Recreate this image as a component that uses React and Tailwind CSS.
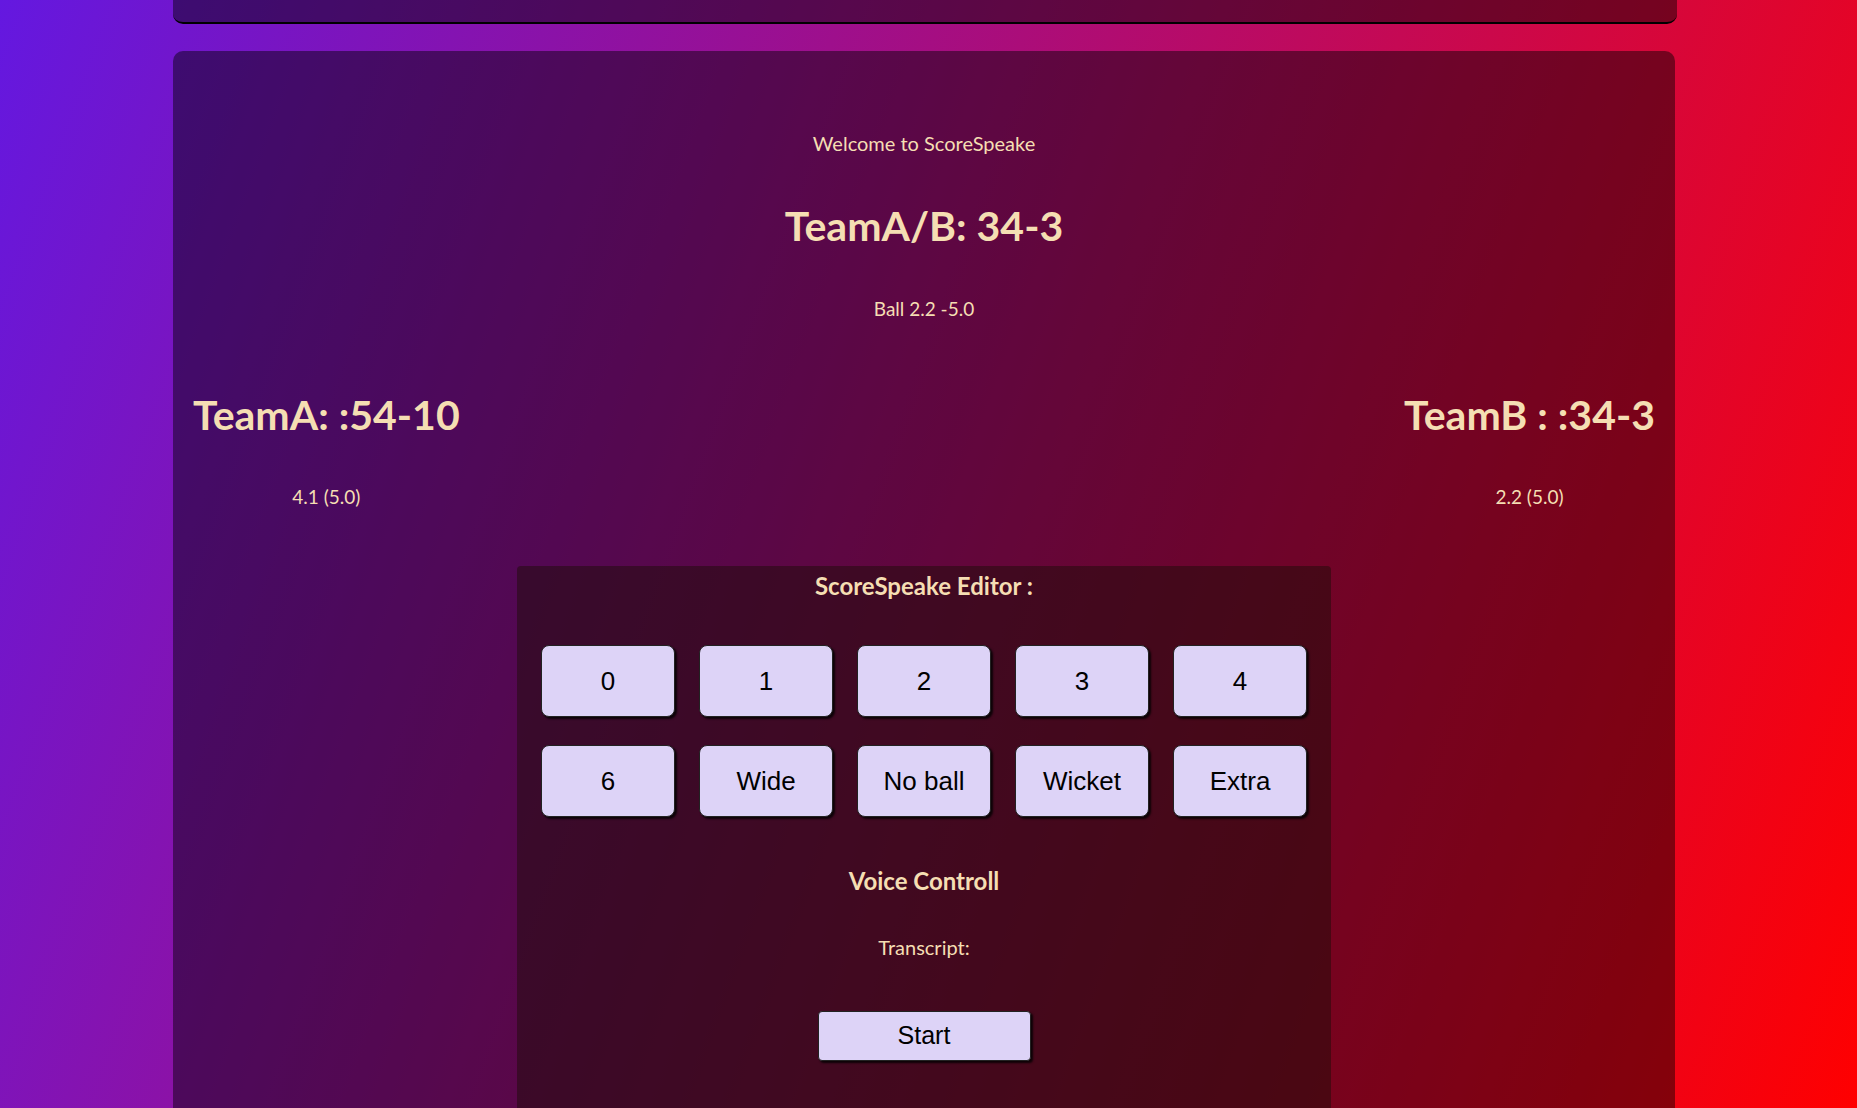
import React from 'react'

const RUNS = ['0', '1', '2', '3', '4', '6', 'Wide', 'No ball', 'Wicket', 'Extra']

function TeamScore({ name, score, overs }) {
  return (
    <div className="flex flex-col items-center">
      <h2 className="text-[41px] leading-[52px] font-bold">{name} :{score}</h2>
      <p className="mt-[45px] text-[19px] leading-[22px]">{overs}</p>
    </div>
  )
}

export default function App() {
  return (
    <div
      className="h-screen overflow-hidden bg-[linear-gradient(110deg,#6418e0_0%,#ff0000_100%)] text-[wheat]"
      style={{ fontFamily: 'Lato, "Open Sans", sans-serif' }}
    >
      {/* nav bar, mostly scrolled off */}
      <div className="ml-[173px] h-[24px] w-[1504px] rounded-b-[10px] border-b-2 border-black bg-black/45" />

      <div className="ml-[173px] mt-[27px] w-[1502px] rounded-[10px] bg-black/45 px-[20px] pt-[80px] pb-[80px]">
        <p className="text-center text-[20px] leading-[24px]">Welcome to ScoreSpeake</p>
        <h1 className="mt-[45px] text-center text-[41px] leading-[52px] font-bold">TeamA/B: 34-3</h1>
        <p className="mt-[46px] text-center text-[19px] leading-[22px]">Ball 2.2 -5.0</p>

        <div className="mt-[69px] flex items-start justify-between">
          <TeamScore name="TeamA:" score="54-10" overs="4.1 (5.0)" />
          <TeamScore name="TeamB :" score="34-3" overs="2.2 (5.0)" />
        </div>

        <div className="mx-auto mt-[58px] w-[814px] rounded-[4px] bg-[#1d0b07]/50 px-[24px] pt-[7px] pb-[120px]">
          <h3 className="text-center text-[24px] leading-[26px] font-bold">ScoreSpeake Editor :</h3>
          <div className="mt-[46px] grid grid-cols-5 gap-x-[24px] gap-y-[28px]">
            {RUNS.map(r => (
              <button
                key={r}
                className="h-[72px] rounded-[8px] border border-[#222] bg-[#ddd3f7] text-[26px] text-black shadow-[2px_2px_2px_rgba(0,0,0,0.8)]"
                style={{ fontFamily: '"Liberation Sans", Arial, sans-serif' }}
              >
                {r}
              </button>
            ))}
          </div>
          <h3 className="mt-[50px] text-center text-[24px] leading-[28px] font-bold">Voice Controll</h3>
          <p className="mt-[40px] text-center text-[20px] leading-[24px]">Transcript:</p>
          <div className="mt-[52px] flex justify-center">
            <button
              className="h-[50px] w-[213px] rounded-[4px] border border-[#222] bg-[#ddd3f7] text-[25px] text-black shadow-[2px_2px_2px_rgba(0,0,0,0.8)]"
              style={{ fontFamily: '"Liberation Sans", Arial, sans-serif' }}
            >
              Start
            </button>
          </div>
        </div>
      </div>
    </div>
  )
}
